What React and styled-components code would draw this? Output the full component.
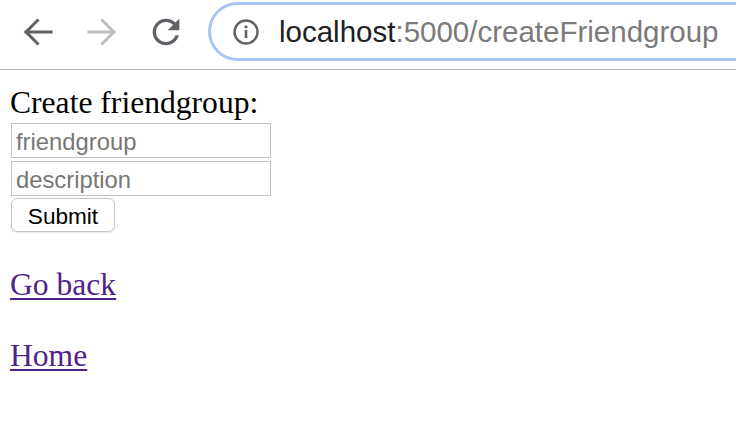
import React from "react"
import styled, { createGlobalStyle } from 'styled-components';

const GlobalStyle = createGlobalStyle`
  html, body {
    margin: 0;
    background: #fff;
  }
`;

const Toolbar = styled.div`
  display: flex;
  align-items: center;
  height: 70px;
  box-sizing: border-box;
  padding: 0 0 6px 6px;
  border-bottom: 1px solid #b4b4b4;
  overflow: hidden;
`;

const NavButton = styled.div`
  display: flex;
  align-items: center;
  justify-content: center;
  flex: 0 0 64px;
  height: 48px;
  color: ${props => props.$disabled ? "#bdbdbd" : "#5f6368"};
`;

const Omnibox = styled.div`
  display: flex;
  align-items: center;
  flex: 0 0 620px;
  height: 59px;
  box-sizing: border-box;
  margin-left: 10px;
  padding-left: 22px;
  border: 3px solid #a8c4f6;
  border-radius: 30px;
`;

const InfoIcon = styled.svg`
  flex: 0 0 26px;
  color: #5f6368;
`;

const Url = styled.div`
  margin-left: 20px;
  font-family: "Liberation Sans", Arial, sans-serif;
  font-size: 29.5px;
  color: #7a7a7a;
  white-space: nowrap;
`;

const Host = styled.span`
  color: #202124;
`;

const Page = styled.div`
  padding: 15px 10px;
  font-family: "Liberation Serif", "Times New Roman", serif;
  font-size: 31.6px;
  line-height: 36px;
  color: #000;
`;

const Title = styled.div``;

const Form = styled.form`
  display: flex;
  flex-direction: column;
  align-items: flex-start;
  margin: 2px 0 0 1px;
`;

const Field = styled.input`
  width: 260px;
  height: 35px;
  box-sizing: border-box;
  margin: 0 0 3px;
  padding: 3px 0 0 4px;
  border: 1px solid #c2c2c2;
  border-radius: 0;
  font-family: "Liberation Sans", Arial, sans-serif;
  font-size: 23.8px;
  color: #000;
  outline: none;

  &::placeholder {
    color: #777;
  }
`;

const SubmitButton = styled.button`
  width: 104px;
  height: 34px;
  box-sizing: border-box;
  margin-top: -1px;
  padding: 3px 0 0;
  border: 1px solid #c6c6c6;
  border-radius: 6px;
  background: #fff;
  box-shadow: 0 1px 1px rgba(0, 0, 0, 0.08);
  font-family: "Liberation Sans", Arial, sans-serif;
  font-size: 22.6px;
  color: #000;
`;

const LinkLine = styled.p`
  margin: 35px 0;
`;

const Link = styled.a`
  color: #4f2389;
  text-decoration: underline;
  text-decoration-thickness: 2px;
  text-underline-offset: 3px;
`;

const BackIcon = ({ flip }) => (
  <svg width="30" height="28" viewBox="0 0 30 28"
    style={flip ? { transform: "scaleX(-1)" } : undefined}>
    <path d="M28 14H3M14.5 2.5L3 14l11.5 11.5" fill="none" stroke="currentColor"
      strokeWidth="3" strokeLinecap="square" />
  </svg>
)

const ReloadIcon = () => (
  <svg width="40" height="40" viewBox="0 0 24 24">
    <path fill="currentColor"
      d="M17.65 6.35C16.2 4.9 14.21 4 12 4c-4.42 0-7.99 3.58-7.99 8s3.57 8 7.99 8c3.73 0 6.84-2.55 7.730-6h-2.08c-.82 2.33-3.04 4-5.65 4-3.31 0-6-2.69-6-6s2.69-6 6-6c1.66 0 3.14.69 4.22 1.78L13 11h7V4l-2.35 2.35z" />
  </svg>
)

export default function App() {
  return (<>
    <GlobalStyle />
    <Toolbar>
      <NavButton><BackIcon /></NavButton>
      <NavButton $disabled><BackIcon flip /></NavButton>
      <NavButton><ReloadIcon /></NavButton>
      <Omnibox>
        <InfoIcon width="26" height="26" viewBox="0 0 26 26">
          <circle cx="13" cy="13" r="11.5" fill="none" stroke="currentColor" strokeWidth="2.4" />
          <rect x="11.7" y="11" width="2.6" height="8" fill="currentColor" />
          <circle cx="13" cy="7.8" r="1.6" fill="currentColor" />
        </InfoIcon>
        <Url><Host>localhost</Host>:5000/createFriendgroup</Url>
      </Omnibox>
    </Toolbar>
    <Page>
      <Title>Create friendgroup:</Title>
      <Form onSubmit={e => e.preventDefault()}>
        <Field type="text" placeholder="friendgroup" />
        <Field type="text" placeholder="description" />
        <SubmitButton type="submit">Submit</SubmitButton>
      </Form>
      <LinkLine><Link href="#back">Go back</Link></LinkLine>
      <LinkLine><Link href="#home">Home</Link></LinkLine>
    </Page>
  </>)
}
